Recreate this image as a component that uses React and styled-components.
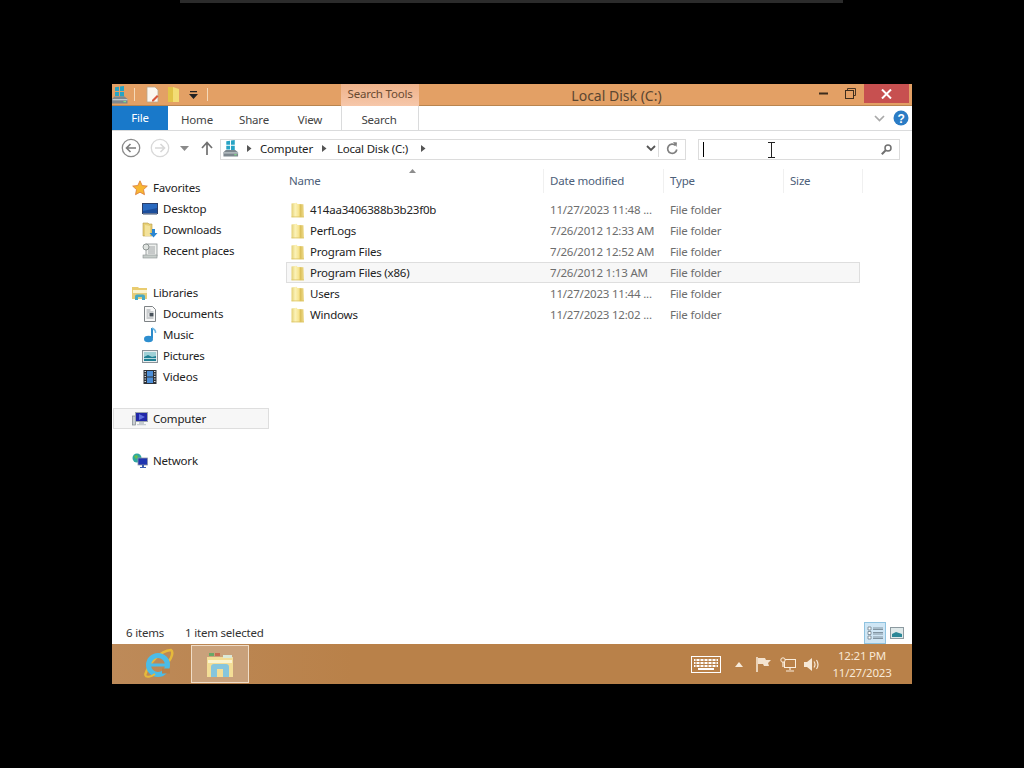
import React from 'react';
import styled, { createGlobalStyle } from 'styled-components';

const GlobalStyle = createGlobalStyle`
  html, body {
    margin: 0;
    padding: 0;
    background: #000;
  }
  body {
    font-family: "Noto Sans", "Open Sans", sans-serif;
    font-size: 11.5px;
    letter-spacing: -0.2px;
    overflow: hidden;
  }
`;

const Screen = styled.div`
  width: 1024px;
  height: 768px;
  background: #000;
  overflow: hidden;
`;

const TopStrip = styled.div`
  width: 663px;
  height: 3px;
  margin-left: 180px;
  background: #2b2b2b;
`;

const Desktop = styled.div`
  width: 800px;
  height: 600px;
  margin: 81px 0 0 112px;
  display: flex;
  flex-direction: column;
  background: #fff;
`;

const TitleBar = styled.div`
  height: 22px;
  flex: none;
  display: flex;
  background: #e3a065;
  border-bottom: 1px solid #b9854f;
  box-sizing: border-box;
  color: #5d4630;
`;

const Qat = styled.div`
  width: 229px;
  flex: none;
  display: flex;
  align-items: center;
`;

const QatDivider = styled.span`
  width: 1px;
  height: 13px;
  flex: none;
  margin: ${(p) => p.$margin};
  background: #f5d9b8;
`;

const QatIcon = styled.svg`
  flex: none;
  margin: ${(p) => p.$margin || 0};
`;

const ContextTab = styled.div`
  width: 78px;
  flex: none;
  height: 22px;
  text-align: center;
  line-height: 20px;
  color: #6a4a30;
  background: linear-gradient(#eeb28a, #f6c7aa);
`;

const WindowTitle = styled.div`
  width: 391px;
  flex: none;
  box-sizing: border-box;
  padding-left: 4px;
  text-align: center;
  font-size: 14px;
  letter-spacing: 0;
  line-height: 23px;
  color: #5b4631;
`;

const WindowButtons = styled.div`
  flex: 1;
  display: flex;
  justify-content: flex-end;
  padding-right: 3px;
  height: 19px;
`;

const WinButton = styled.div`
  width: ${(p) => p.$w}px;
  height: 19px;
  display: flex;
  align-items: center;
  justify-content: center;
  background: ${(p) => p.$bg || 'transparent'};
`;

const Ribbon = styled.div`
  height: 24px;
  flex: none;
  display: flex;
  align-items: stretch;
  border-bottom: 1px solid #dadbdc;
`;

const FileTab = styled.div`
  width: 56px;
  background: #1979ca;
  color: #fff;
  text-align: center;
  line-height: 23px;
`;

const RibbonTab = styled.div`
  width: ${(p) => p.$w}px;
  text-align: center;
  line-height: 28px;
  color: #444;
  box-sizing: border-box;
  padding-right: ${(p) => p.$pr || 0}px;
  border-left: ${(p) => (p.$context ? '1px solid #dadbdc' : 'none')};
  border-right: ${(p) => (p.$context ? '1px solid #dadbdc' : 'none')};
`;

const RibbonRight = styled.div`
  flex: 1;
  display: flex;
  justify-content: flex-end;
  align-items: center;
  gap: 8px;
  padding-right: 3px;
`;

const AddressRow = styled.div`
  height: 38px;
  flex: none;
  display: flex;
  align-items: flex-start;
  box-sizing: border-box;
  padding: 8px 0 0 9px;
`;

const NavButtons = styled.div`
  width: 99px;
  flex: none;
  display: flex;
  align-items: center;
  margin-top: -1px;
  height: 20px;
`;

const NavGap = styled.span`
  width: ${(p) => p.$w}px;
  flex: none;
`;

const AddressBox = styled.div`
  width: 466px;
  height: 21px;
  flex: none;
  display: flex;
  align-items: center;
  box-sizing: border-box;
  border: 1px solid #dcdcdc;
  padding-bottom: 2px;
  color: #222;
`;

const Crumb = styled.span`
  display: flex;
  align-items: center;
  white-space: nowrap;
  margin: 0 ${(p) => p.$right || 0}px 0 ${(p) => p.$left || 0}px;
`;

const AddressEnd = styled.div`
  margin-left: auto;
  display: flex;
  align-items: center;
  height: 100%;
`;

const RefreshCell = styled.div`
  width: 26px;
  height: 100%;
  margin-left: 2px;
  display: flex;
  align-items: center;
  justify-content: center;
  border-left: 1px solid #dcdcdc;
`;

const SearchBox = styled.div`
  position: relative;
  width: 202px;
  height: 21px;
  flex: none;
  margin-left: 12px;
  display: flex;
  align-items: center;
  justify-content: space-between;
  box-sizing: border-box;
  border: 1px solid #dcdcdc;
  padding: 0 7px 1px 4px;
`;

const Caret = styled.span`
  width: 1px;
  height: 15px;
  background: #000;
`;

const IBeam = styled.svg`
  position: absolute;
  left: 69px;
  top: 2px;
`;

const Body = styled.div`
  flex: 1;
  min-height: 0;
  display: flex;
`;

const NavPane = styled.div`
  width: 157px;
  flex: none;
  padding: 8px 0 0 1px;
  box-sizing: border-box;
`;

const NavRow = styled.div`
  height: 21px;
  display: flex;
  align-items: center;
  gap: 5px;
  box-sizing: border-box;
  padding-left: ${(p) => (p.$child ? 29 : 19)}px;
  margin-bottom: ${(p) => (p.$last ? 21 : 0)}px;
  color: #222;
  background: ${(p) => (p.$active ? '#f7f7f7' : 'transparent')};
  border: ${(p) => (p.$active ? '1px solid #dedede' : 'none')};
  ${(p) => p.$active && 'padding-left: 18px; width: 156px;'}
`;

const ListPane = styled.div`
  flex: 1;
  min-width: 0;
  padding: 0 0 0 17px;
`;

const HeaderRow = styled.div`
  position: relative;
  height: 24px;
  width: 578px;
  display: grid;
  grid-template-columns: 258px 120px 120px 79px;
  align-items: center;
  box-sizing: border-box;
  color: #4d6079;
`;

const HeaderCell = styled.div`
  height: 24px;
  line-height: 24px;
  padding-left: ${(p) => (p.$first ? 3 : 6)}px;
  border-right: 1px solid #f0f0f0;
  box-sizing: border-box;
`;

const SortArrow = styled.svg`
  position: absolute;
  left: 123px;
  top: 0;
`;

const Rows = styled.div`
  padding-top: 6px;
`;

const FileRow = styled.div`
  height: 21px;
  width: 574px;
  display: grid;
  grid-template-columns: 258px 120px 120px;
  align-items: center;
  box-sizing: border-box;
  background: ${(p) => (p.$hover ? '#f7f7f7' : 'transparent')};
  outline: ${(p) => (p.$hover ? '1px solid #dedede' : 'none')};
  outline-offset: -1px;
`;

const NameCell = styled.div`
  display: flex;
  align-items: center;
  gap: 4px;
  padding-left: 4px;
  color: #222;
`;

const InfoCell = styled.div`
  padding-left: 6px;
  color: #6d6d6d;
  white-space: nowrap;
`;

const StatusBar = styled.div`
  height: 22px;
  flex: none;
  display: flex;
  align-items: center;
  box-sizing: border-box;
  padding: 0 14px 2px 14px;
  color: #333;
`;

const StatusText = styled.span`
  width: ${(p) => p.$w}px;
  flex: none;
`;

const ViewButtons = styled.div`
  margin-left: auto;
  display: flex;
  align-items: center;
  margin-right: -10px;
  margin-bottom: -2px;
`;

const ViewButton = styled.div`
  width: 22px;
  height: 22px;
  display: flex;
  align-items: center;
  justify-content: center;
  box-sizing: border-box;
  background: ${(p) => (p.$on ? '#cfe6f5' : 'transparent')};
  border: 1px solid ${(p) => (p.$on ? '#8fc3e0' : 'transparent')};
`;

const Taskbar = styled.div`
  height: 40px;
  flex: none;
  display: flex;
  align-items: center;
  background: linear-gradient(90deg, #bd8a59, #b98149 30%, #b98149);
`;

const StartSlot = styled.div`
  width: 79px;
  flex: none;
  display: flex;
  justify-content: flex-end;
  padding-right: 17px;
  box-sizing: border-box;
`;

const TaskButton = styled.div`
  width: 58px;
  height: 38px;
  display: flex;
  align-items: center;
  justify-content: center;
  box-sizing: border-box;
  background: #c9a17b;
  border: 1px solid #f0ddc8;
`;

const Tray = styled.div`
  margin-left: auto;
  display: flex;
  align-items: center;
`;

const Clock = styled.div`
  width: 70px;
  text-align: center;
  line-height: 17px;
  color: #f8e8d6;
  margin: 0 15px 0 7px;
`;

const TrayIcon = styled.div`
  display: flex;
  margin-left: ${(p) => p.$gap}px;
`;

const Folder = () => (
  <svg width="16" height="18" viewBox="0 0 16 18">
    <defs>
      <linearGradient id="folderFace" x1="0" y1="0" x2="1" y2="0">
        <stop offset="0" stopColor="#e3cf73" />
        <stop offset="0.3" stopColor="#fbf2b8" />
        <stop offset="0.62" stopColor="#f6e28a" />
        <stop offset="0.68" stopColor="#d9bd56" />
        <stop offset="1" stopColor="#efdc8e" />
      </linearGradient>
    </defs>
    <path d="M1.500 2.500l5-.8 1 1.300 6 .3.500 13H1.500z" fill="url(#folderFace)" />
    <path d="M1.500 15.500h12.500v.8H1.500z" fill="#dcc566" />
  </svg>
);

const Star = () => (
  <svg width="16" height="16" viewBox="0 0 16 16">
    <path d="M8 .8l2.200 4.700 5.100.6-3.800 3.500 1 5.100L8 12.200l-4.500 2.500 1-5.100L.7 6.100l5.100-.6z" fill="#f7b733" stroke="#d9793a" strokeWidth=".8" />
  </svg>
);

const DesktopIcon = () => (
  <svg width="16" height="16" viewBox="0 0 16 16">
    <rect x="0.500" y="2.500" width="15" height="10" fill="#2a6ac0" stroke="#2b3f6b" />
    <path d="M1 10l14-3v5H1z" fill="#1c4e9c" />
    <rect x="1" y="12.500" width="14" height="1.500" fill="#9aa6b8" />
  </svg>
);

const DownloadsIcon = () => (
  <svg width="16" height="16" viewBox="0 0 16 16">
    <path d="M1 1h5l1 1h3v12H1z" fill="#e6cf76" stroke="#b89a48" strokeWidth=".6" />
    <path d="M3 3l5 1v10H3z" fill="#f3e29b" />
    <path d="M10 7h3v4h2.500l-4 4.500-4-4.500H10z" fill="#2a86d2" />
  </svg>
);

const RecentIcon = () => (
  <svg width="16" height="16" viewBox="0 0 16 16">
    <rect x="4" y="1" width="11" height="12" fill="#eef0ee" stroke="#8b9192" strokeWidth=".8" />
    <path d="M6 4h7M6 6h7M6 8h7M6 10h7" stroke="#8b9192" strokeWidth=".8" />
    <circle cx="4" cy="4" r="3" fill="#dfe3e0" stroke="#7b8382" strokeWidth=".8" />
    <rect x="1" y="12" width="14" height="3" fill="#c7cdca" stroke="#8b9192" strokeWidth=".6" />
  </svg>
);

const LibrariesIcon = () => (
  <svg width="16" height="16" viewBox="0 0 16 16">
    <path d="M0 2h6l1 1h8v11H0z" fill="#e9cc70" />
    <path d="M1 5h14v3H1z" fill="#fbf3cf" />
    <path d="M1 8h14v6H1z" fill="#e3cd7c" />
    <path d="M3 15v-3.500q0-2 2-2h6q2 0 2 2V15h-3v-3H6v3z" fill="#46a9c4" />
  </svg>
);

const DocumentsIcon = () => (
  <svg width="16" height="16" viewBox="0 0 16 16">
    <path d="M2.500.5h8l3 3v12h-11z" fill="#f8f8f8" stroke="#7d8285" />
    <path d="M4.500 4h4M4.500 6h7M4.500 8h2M4.500 10h2M4.500 12h7" stroke="#9aa0a4" />
    <rect x="7.500" y="7" width="4" height="3.500" fill="#49525b" />
  </svg>
);

const MusicIcon = () => (
  <svg width="16" height="16" viewBox="0 0 16 16">
    <path d="M10 1v10" stroke="#2c8ac9" strokeWidth="2" />
    <path d="M10 1c2 1 4 2 3.500 5" fill="none" stroke="#6db6e3" strokeWidth="1.500" />
    <ellipse cx="6.500" cy="12" rx="4.500" ry="3.200" fill="#2d8ecf" />
  </svg>
);

const PicturesIcon = () => (
  <svg width="16" height="16" viewBox="0 0 16 16">
    <rect x="0.500" y="2.500" width="15" height="12" fill="#e9eef0" stroke="#8a9298" />
    <rect x="2" y="4" width="12" height="9" fill="#9ed0d6" />
    <path d="M2 9l4-2 4 2 4-1v5H2z" fill="#1f7f93" />
    <path d="M2 10h12v.8H2z" fill="#d9eef0" />
  </svg>
);

const VideosIcon = () => (
  <svg width="16" height="16" viewBox="0 0 16 16">
    <rect x="1.500" y="1" width="13" height="14" fill="#2e3238" />
    <rect x="5" y="2" width="6" height="5.500" fill="#4d8fd8" />
    <rect x="5" y="8.500" width="6" height="5.500" fill="#4d8fd8" />
    <path d="M2.500 2.500h1.500M2.500 5h1.500M2.500 7.500h1.500M2.500 10h1.500M2.500 12.500h1.500M12 2.500h1.500M12 5h1.500M12 7.500h1.500M12 10h1.500M12 12.500h1.500" stroke="#d9dde0" strokeWidth="1.200" />
  </svg>
);

const ComputerIcon = () => (
  <svg width="16" height="16" viewBox="0 0 16 16">
    <rect x="0.500" y="5" width="3" height="9" fill="#c9ced2" stroke="#7f868c" strokeWidth=".7" />
    <rect x="3.500" y="1.500" width="12" height="9" fill="#2127a8" stroke="#9da6ae" />
    <path d="M7 3l6 3-6 3z" fill="#5e6fe0" />
    <path d="M7 11h5v2h2v1.200H5V13h2z" fill="#c5cbd0" />
  </svg>
);

const NetworkIcon = () => (
  <svg width="16" height="16" viewBox="0 0 16 16">
    <circle cx="5" cy="5" r="4.500" fill="#2fa7a0" />
    <path d="M2 3l3-1 1 2-2 2zM6 6l2 1-1 2z" fill="#6bbf4c" />
    <rect x="6" y="5" width="9.500" height="7" fill="#1e35b0" stroke="#8f9aa6" strokeWidth=".8" />
    <path d="M10 12h2v2h2v1H8v-1h2z" fill="#3a5fb0" />
  </svg>
);

const DriveIcon = ({ height = 18 }) => (
  <svg width="16" height={height} viewBox="0 0 16 18">
    <path d="M3 1.300l4-.6V5H3zM8 .5l4-.5v5H8zM3 6h4v4H3zM8 6h4v4.500H8z" fill="#27a3c4" />
    <path d="M0 13l2.500-2.500h10L15.500 13v4.500H0z" fill="#7d878e" />
    <rect x="0.500" y="13" width="15" height="1.300" fill="#c2c9cd" />
    <rect x="11.500" y="15" width="2.500" height="1.200" fill="#7fe08a" />
  </svg>
);

const Chevron = () => (
  <svg width="5" height="7" viewBox="0 0 5 7">
    <path d="M0 0l4.500 3.500L0 7z" fill="#555" />
  </svg>
);

const RoundArrow = ({ enabled, flip }) => (
  <svg width="20" height="20" viewBox="0 0 20 20">
    <circle cx="10" cy="10" r="8.700" fill="#fff" stroke={enabled ? '#8a8a8a' : '#d8d8d8'} strokeWidth="1.300" />
    <g transform={flip ? 'rotate(180 10 10)' : undefined}>
      <path d="M15 10H6M9.500 6L5.500 10l4 4" fill="none" stroke={enabled ? '#7b7b7b' : '#d8d8d8'} strokeWidth="1.600" />
    </g>
  </svg>
);

const favorites = [
  ['Desktop', DesktopIcon],
  ['Downloads', DownloadsIcon],
  ['Recent places', RecentIcon],
];

const libraries = [
  ['Documents', DocumentsIcon],
  ['Music', MusicIcon],
  ['Pictures', PicturesIcon],
  ['Videos', VideosIcon],
];

const files = [
  ['414aa3406388b3b23f0b', '11/27/2023 11:48 ...'],
  ['PerfLogs', '7/26/2012 12:33 AM'],
  ['Program Files', '7/26/2012 12:52 AM'],
  ['Program Files (x86)', '7/26/2012 1:13 AM', true],
  ['Users', '11/27/2023 11:44 ...'],
  ['Windows', '11/27/2023 12:02 ...'],
];

const App = () => (
  <Screen>
    <GlobalStyle />
    <TopStrip />
    <Desktop>
      <TitleBar>
        <Qat>
          <DriveIcon />
          <QatDivider $margin="0 10px 0 6px" />
          <QatIcon width="15" height="17" viewBox="0 0 15 17">
            <path d="M2 1h8l3 3v12H2z" fill="#fbf7f0" stroke="#b9a68c" strokeWidth=".8" />
            <path d="M7 14l5-5 1.500 1.500-5 5H7z" fill="#d9583c" />
          </QatIcon>
          <QatIcon width="14" height="17" viewBox="0 0 14 17" $margin="0 0 0 7px">
            <path d="M1 1h5v15H1z" fill="#e2c348" />
            <path d="M6 1l6 2v13H6z" fill="#f3dc74" />
          </QatIcon>
          <QatIcon width="9" height="9" viewBox="0 0 9 9" $margin="2px 0 0 8px">
            <path d="M1 0h7v1.200H1zM0 3h9L4.500 8z" fill="#222" />
          </QatIcon>
          <QatDivider $margin="0 0 0 9px" />
        </Qat>
        <ContextTab>Search Tools</ContextTab>
        <WindowTitle>Local Disk (C:)</WindowTitle>
        <WindowButtons>
          <WinButton $w="26">
            <svg width="9" height="3" viewBox="0 0 9 3"><rect y="0.500" width="9" height="2" fill="#3d2c1c" /></svg>
          </WinButton>
          <WinButton $w="28">
            <svg width="11" height="11" viewBox="0 0 11 11">
              <path d="M2.500 2.500V.5h8v7H8.500" fill="none" stroke="#4a3624" />
              <rect x="0.500" y="2.500" width="8" height="8" fill="none" stroke="#3d2c1c" strokeWidth="1" />
            </svg>
          </WinButton>
          <WinButton $w="45" $bg="#c75050">
            <svg width="11" height="10" viewBox="0 0 11 10">
              <path d="M1 .5l9 9M10 .5l-9 9" stroke="#fff" strokeWidth="2" />
            </svg>
          </WinButton>
        </WindowButtons>
      </TitleBar>

      <Ribbon>
        <FileTab>File</FileTab>
        <RibbonTab $w="58">Home</RibbonTab>
        <RibbonTab $w="56">Share</RibbonTab>
        <RibbonTab $w="59" $pr="3">View</RibbonTab>
        <RibbonTab $w="78" $pr="2" $context>Search</RibbonTab>
        <RibbonRight>
          <svg width="11" height="7" viewBox="0 0 11 7">
            <path d="M1 1l4.500 4.500L10 1" fill="none" stroke="#a9a9a9" strokeWidth="1.700" />
          </svg>
          <svg width="16" height="16" viewBox="0 0 16 16">
            <circle cx="8" cy="8" r="7.500" fill="#2b7cc5" />
            <text x="8" y="12.500" textAnchor="middle" fontSize="12" fontWeight="700" fill="#fff" fontFamily="Liberation Sans">?</text>
          </svg>
        </RibbonRight>
      </Ribbon>

      <AddressRow>
        <NavButtons>
          <RoundArrow enabled />
          <NavGap $w="9" />
          <RoundArrow flip />
          <NavGap $w="10" />
          <svg width="9" height="5" viewBox="0 0 9 5"><path d="M0 0h9L4.500 5z" fill="#8a8a8a" /></svg>
          <NavGap $w="12" />
          <svg width="12" height="14" viewBox="0 0 12 14">
            <path d="M6 14V2M1 7l5-5.500L11 7" fill="none" stroke="#707070" strokeWidth="1.700" />
          </svg>
        </NavButtons>
        <AddressBox>
          <Crumb $left="2"><DriveIcon height="17" /></Crumb>
          <Crumb $left="8" $right="8"><Chevron /></Crumb>
          <Crumb>Computer</Crumb>
          <Crumb $left="9" $right="10"><Chevron /></Crumb>
          <Crumb>Local Disk (C:)</Crumb>
          <Crumb $left="13"><Chevron /></Crumb>
          <AddressEnd>
            <svg width="10" height="7" viewBox="0 0 10 7">
              <path d="M1 1l4 4 4-4" fill="none" stroke="#555" strokeWidth="1.800" />
            </svg>
            <RefreshCell>
              <svg width="12" height="13" viewBox="0 0 12 13">
                <path d="M9.500 3.500A4.600 4.600 0 1 0 10.800 7.500" fill="none" stroke="#808080" strokeWidth="1.700" />
                <path d="M7 0l4 .5-.5 4.500z" fill="#808080" />
              </svg>
            </RefreshCell>
          </AddressEnd>
        </AddressBox>
        <SearchBox>
          <Caret />
          <svg width="11" height="11" viewBox="0 0 11 11">
            <circle cx="7" cy="4" r="3" fill="none" stroke="#707070" strokeWidth="1.500" />
            <path d="M4.500 6.500L.8 10.200" stroke="#707070" strokeWidth="2" />
          </svg>
          <IBeam width="7" height="16" viewBox="0 0 7 16">
            <path d="M0 .5h7M0 15.500h7M3.500 .5v15" stroke="#222" fill="none" />
          </IBeam>
        </SearchBox>
      </AddressRow>

      <Body>
        <NavPane>
          <NavRow><Star />Favorites</NavRow>
          {favorites.map(([name, Icon], i) => (
            <NavRow key={name} $child $last={i === favorites.length - 1}><Icon />{name}</NavRow>
          ))}
          <NavRow><LibrariesIcon />Libraries</NavRow>
          {libraries.map(([name, Icon], i) => (
            <NavRow key={name} $child $last={i === libraries.length - 1}><Icon />{name}</NavRow>
          ))}
          <NavRow $active $last><ComputerIcon />Computer</NavRow>
          <NavRow><NetworkIcon />Network</NavRow>
        </NavPane>
        <ListPane>
          <HeaderRow>
            <HeaderCell $first>Name</HeaderCell>
            <HeaderCell>Date modified</HeaderCell>
            <HeaderCell>Type</HeaderCell>
            <HeaderCell>Size</HeaderCell>
            <SortArrow width="7" height="4" viewBox="0 0 7 4"><path d="M0 4L3.500 0 7 4z" fill="#8d8d8d" /></SortArrow>
          </HeaderRow>
          <Rows>
            {files.map(([name, date, hover]) => (
              <FileRow key={name} $hover={hover}>
                <NameCell><Folder />{name}</NameCell>
                <InfoCell>{date}</InfoCell>
                <InfoCell>File folder</InfoCell>
              </FileRow>
            ))}
          </Rows>
        </ListPane>
      </Body>

      <StatusBar>
        <StatusText $w="59">6 items</StatusText>
        <StatusText $w="100">1 item selected</StatusText>
        <ViewButtons>
          <ViewButton $on>
            <svg width="16" height="14" viewBox="0 0 16 14">
              <path d="M1 1h3v3H1zM1 5.500h3v3H1zM1 10h3v3H1z" fill="#fff" stroke="#6d7f8c" strokeWidth=".8" />
              <path d="M6 2h10M6 3.500h10M6 6.500h10M6 8h10M6 11h10M6 12.500h10" stroke="#6d7f8c" strokeWidth=".8" />
            </svg>
          </ViewButton>
          <ViewButton>
            <svg width="14" height="12" viewBox="0 0 14 12">
              <rect x="0.500" y="0.500" width="13" height="11" fill="#dfe9ea" stroke="#8c9aa0" />
              <path d="M2 7l4-2 6 2v3H2z" fill="#2b8797" />
            </svg>
          </ViewButton>
        </ViewButtons>
      </StatusBar>

      <Taskbar>
        <StartSlot>
          <svg width="32" height="32" viewBox="0 0 32 32">
            <path d="M3 27C7 15 18 3 29 2c3 2 0 9-2 11" fill="none" stroke="#e6b93b" strokeWidth="2.500" />
            <circle cx="16" cy="17" r="9.500" fill="none" stroke="#4cbce6" strokeWidth="5" />
            <path d="M9 15.500h15v3H9z" fill="#4cbce6" />
            <path d="M20 20.500h8v5h-8z" fill="#b98149" />
            <path d="M3 27c1 3 6 2 10-1" fill="none" stroke="#e6b93b" strokeWidth="2" />
          </svg>
        </StartSlot>
        <TaskButton>
          <svg width="30" height="30" viewBox="0 0 30 30">
            <path d="M2 8h26v20H2z" fill="#f3dd96" />
            <path d="M3 11h24v3H3z" fill="#fbf3cf" />
            <path d="M4 4h5v3H4z" fill="#6aa766" />
            <path d="M10 4h5v3h-5z" fill="#c66a50" />
            <path d="M18 6h9v3h-9z" fill="#dbe9d8" />
            <path d="M6 18q0-3 3-3h12q3 0 3 3v10h-6v-8h-6v8H6z" fill="#86c5dc" />
          </svg>
        </TaskButton>
        <Tray>
          <svg width="30" height="17" viewBox="0 0 30 17">
            <rect x="0.500" y="0.500" width="29" height="16" fill="#b98149" stroke="#fff" />
            <path d="M3 4h24M3 7h24M3 10h24M7 13h16" stroke="#fff" strokeWidth="2" />
            <path d="M5 3v9M9 3v9M13 3v9M17 3v9M21 3v9M25 3v9" stroke="#b98149" />
          </svg>
          <TrayIcon $gap="14"><svg width="8" height="5" viewBox="0 0 8 5"><path d="M0 5l4-5 4 5z" fill="#f7ead9" /></svg></TrayIcon>
          <TrayIcon $gap="12">
            <svg width="17" height="15" viewBox="0 0 17 15">
              <path d="M2 0v15" stroke="#fbeedd" strokeWidth="1.500" />
              <path d="M3 1h7l1 2h5l-3 3 1 3H9L8 7H3z" fill="#f4e3cf" />
            </svg>
          </TrayIcon>
          <TrayIcon $gap="8">
            <svg width="16" height="15" viewBox="0 0 16 15">
              <rect x="4.500" y="2.500" width="11" height="8" fill="none" stroke="#fbeedd" />
              <circle cx="3" cy="3" r="2.200" fill="#b98149" stroke="#fbeedd" />
              <path d="M3 5v5M10 10.500v2.500M6 14h8" stroke="#fbeedd" strokeWidth="1.200" />
            </svg>
          </TrayIcon>
          <TrayIcon $gap="8">
            <svg width="16" height="15" viewBox="0 0 16 15">
              <path d="M0 5h3l5-4v13l-5-4H0z" fill="#f6e8d6" />
              <path d="M10 4.500q2 3 0 6M12.500 3q3 4.500 0 9" fill="none" stroke="#f6e8d6" strokeWidth="1.200" />
            </svg>
          </TrayIcon>
          <Clock>12:21 PM<br />11/27/2023</Clock>
        </Tray>
      </Taskbar>
    </Desktop>
  </Screen>
);

export default App;
